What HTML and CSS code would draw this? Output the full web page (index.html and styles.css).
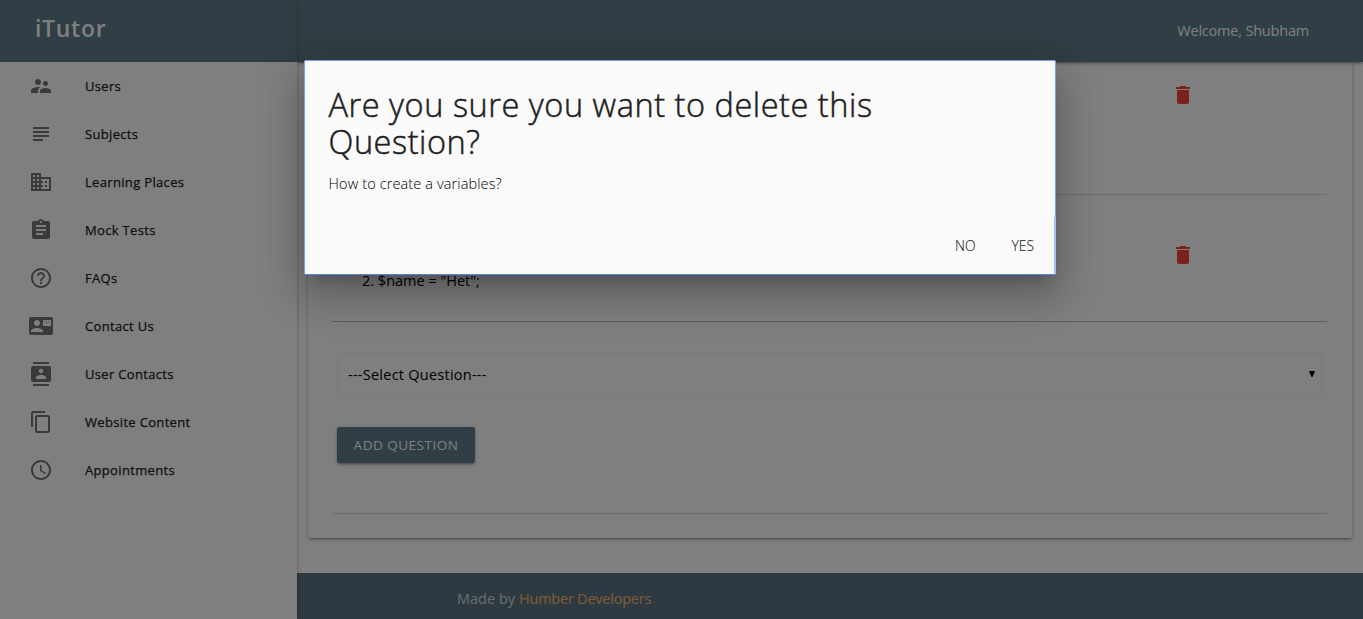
FILE: index.html
```
<!DOCTYPE html>
<html lang="en">
<head>
<meta charset="utf-8">
<title>iTutor</title>
<link rel="stylesheet" href="styles.css">
</head>
<body>
<div class="app">
  <aside class="sidenav">
    <div class="brand"><span class="brand-name">iTutor</span></div>
    <nav class="menu">
      <a class="item"><svg class="icon" viewBox="0 0 24 24"><path d="M16.500 12c1.380 0 2.490-1.120 2.490-2.500S17.880 7 16.500 7C15.120 7 14 8.120 14 9.500s1.120 2.500 2.500 2.500zM9 11c1.660 0 2.990-1.340 2.990-3S10.660 5 9 5C7.340 5 6 6.340 6 8s1.340 3 3 3zm7.500 3c-1.830 0-5.500.92-5.500 2.750V19h11v-2.250c0-1.830-3.670-2.750-5.500-2.750zM9 13c-2.330 0-7 1.170-7 3.500V19h7v-2.250c0-.85.33-2.340 2.370-3.470C10.500 13.100 9.660 13 9 13z"/></svg><span class="label">Users</span></a>
      <a class="item"><svg class="icon" viewBox="0 0 24 24"><path d="M14 17H4v2h10v-2zm6-8H4v2h16V9zM4 15h16v-2H4v2zM4 5v2h16V5H4z"/></svg><span class="label">Subjects</span></a>
      <a class="item"><svg class="icon" viewBox="0 0 24 24"><path d="M12 7V3H2v18h20V7H12zM6 19H4v-2h2v2zm0-4H4v-2h2v2zm0-4H4V9h2v2zm0-4H4V5h2v2zm4 12H8v-2h2v2zm0-4H8v-2h2v2zm0-4H8V9h2v2zm0-4H8V5h2v2zm10 12h-8v-2h2v-2h-2v-2h2v-2h-2V9h8v10zm-2-8h-2v2h2v-2zm0 4h-2v2h2v-2z"/></svg><span class="label">Learning Places</span></a>
      <a class="item"><svg class="icon" viewBox="0 0 24 24"><path d="M19 3h-4.180C14.400 1.840 13.300 1 12 1c-1.300 0-2.400.84-2.820 2H5c-1.100 0-2 .9-2 2v14c0 1.100.9 2 2 2h14c1.100 0 2-.9 2-2V5c0-1.100-.9-2-2-2zm-7 0c.55 0 1 .45 1 1s-.45 1-1 1-1-.45-1-1 .45-1 1-1zm2 14H7v-2h7v2zm3-4H7v-2h10v2zm0-4H7V7h10v2z"/></svg><span class="label">Mock Tests</span></a>
      <a class="item"><svg class="icon" viewBox="0 0 24 24"><path d="M11 18h2v-2h-2v2zm1-16C6.480 2 2 6.480 2 12s4.480 10 10 10 10-4.480 10-10S17.520 2 12 2zm0 18c-4.410 0-8-3.590-8-8s3.590-8 8-8 8 3.590 8 8-3.590 8-8 8zm0-14c-2.210 0-4 1.790-4 4h2c0-1.100.9-2 2-2s2 .9 2 2c0 2-3 1.750-3 5h2c0-2.250 3-2.500 3-5 0-2.210-1.790-4-4-4z"/></svg><span class="label">FAQs</span></a>
      <a class="item"><svg class="icon" viewBox="0 0 24 24"><path d="M22 3H2C.9 3 0 3.900 0 5v14c0 1.100.9 2 2 2h20c1.100 0 1.990-.9 1.990-2L24 5c0-1.100-.9-2-2-2zM8 6c1.660 0 3 1.340 3 3s-1.340 3-3 3-3-1.340-3-3 1.340-3 3-3zm6 12H2v-1c0-2 4-3.100 6-3.100s6 1.100 6 3.100v1zm8-6h-8V6h8v6z"/><path d="M21 7.500V7l-3 2-3-2v.5l3 2 3-2z"/></svg><span class="label">Contact Us</span></a>
      <a class="item"><svg class="icon" viewBox="0 0 24 24"><path d="M20 0H4v2h16V0zM4 24h16v-2H4v2zM20 4H4c-1.100 0-2 .9-2 2v12c0 1.100.9 2 2 2h16c1.100 0 2-.9 2-2V6c0-1.100-.9-2-2-2zm-8 2.750c1.240 0 2.250 1.010 2.250 2.250s-1.010 2.250-2.250 2.250S9.750 10.240 9.750 9 10.760 6.750 12 6.750zM17 17H7v-1.500c0-1.670 3.330-2.500 5-2.500s5 .83 5 2.500V17z"/></svg><span class="label">User Contacts</span></a>
      <a class="item"><svg class="icon" viewBox="0 0 24 24"><path d="M16 1H4c-1.100 0-2 .9-2 2v14h2V3h12V1zm3 4H8c-1.100 0-2 .9-2 2v14c0 1.100.9 2 2 2h11c1.100 0 2-.9 2-2V7c0-1.100-.9-2-2-2zm0 16H8V7h11v14z"/></svg><span class="label">Website Content</span></a>
      <a class="item"><svg class="icon" viewBox="0 0 24 24"><path d="M11.990 2C6.470 2 2 6.480 2 12s4.470 10 9.990 10C17.520 22 22 17.520 22 12S17.520 2 11.990 2zM12 20c-4.420 0-8-3.580-8-8s3.580-8 8-8 8 3.580 8 8-3.580 8-8 8zm.5-13H11v6l5.250 3.150.75-1.230-4.500-2.670z"/></svg><span class="label">Appointments</span></a>
    </nav>
  </aside>
  <div class="page">
    <header class="topbar"><span class="welcome">Welcome, Shubham</span></header>
    <main class="content">
      <section class="card">
        <div class="question first">
          <svg class="trash" viewBox="0 0 24 24"><path d="M6 19c0 1.100.9 2 2 2h8c1.100 0 2-.9 2-2V7H6v12zM19 4h-3.500l-1-1h-5l-1 1H5v2h14V4z"/></svg>
        </div>
        <div class="question second">
          <span class="answer">2. $name = "Het";</span>
          <svg class="trash" viewBox="0 0 24 24"><path d="M6 19c0 1.100.9 2 2 2h8c1.100 0 2-.9 2-2V7H6v12zM19 4h-3.500l-1-1h-5l-1 1H5v2h14V4z"/></svg>
        </div>
        <form class="add-form">
          <div class="select"><span class="select-text">---Select Question---</span><svg class="caret" viewBox="0 0 6 6"><path d="M0 0h6L3.500 6h-1z"/></svg></div>
          <button class="add" type="button"><span class="add-text">ADD QUESTION</span></button>
        </form>
      </section>
    </main>
    <footer class="footer"><span class="made">Made by</span><a class="team">Humber Developers</a></footer>
  </div>
</div>
<div class="overlay"></div>
<div class="modal" role="dialog">
  <h4 class="title">Are you sure you want to delete this Question?</h4>
  <p class="subject">How to create a variables?</p>
  <div class="actions"><a class="no">NO</a><a class="yes">YES</a></div>
</div>
</body>
</html>
```
FILE: styles.css
```
* { box-sizing: border-box; }

body {
  margin: 0;
  font-family: "Open Sans", "Noto Sans", sans-serif;
  font-size: 14.5px;
  color: rgba(0, 0, 0, .87);
  overflow: hidden;
}

.app { display: flex; height: 619px; background: #fff; }

.sidenav {
  position: relative;
  z-index: 2;
  flex: none;
  width: 297px;
  background: #fff;
  box-shadow: 0 2px 2px 0 rgba(0, 0, 0, .14), 0 3px 1px -2px rgba(0, 0, 0, .12), 0 1px 5px 0 rgba(0, 0, 0, .2);
}

.brand { height: 62px; padding: 9px 0 0 35px; background: #607d8b; color: #fff; }
.brand-name { font: 600 23px/38px "Open Sans", sans-serif; letter-spacing: .7px; }

.item { display: flex; align-items: center; height: 48px; padding-left: 29px; }
.icon { width: 24px; height: 24px; margin-right: 32px; fill: rgba(0, 0, 0, .54); }
.label { font-size: 13px; font-weight: 500; letter-spacing: .33px; color: #212121; -webkit-text-stroke: .25px #212121; }

.page { flex: 1; display: flex; flex-direction: column; }

.topbar {
  position: relative;
  z-index: 1;
  display: flex;
  align-items: center;
  justify-content: flex-end;
  height: 62px;
  padding: 0 54px 2px 0;
  background: #607d8b;
  color: #fff;
  letter-spacing: -.2px;
  box-shadow: 0 2px 2px 0 rgba(0, 0, 0, .14), 0 3px 1px -2px rgba(0, 0, 0, .12), 0 1px 5px 0 rgba(0, 0, 0, .2);
}

.content { height: 511px; padding: 0 11px 35px; }

.card {
  height: 476px;
  padding: 0 25px 24px 24px;
  border-radius: 0 0 2px 2px;
  background: #fff;
  box-shadow: 0 2px 2px 0 rgba(0, 0, 0, .14), 0 3px 1px -2px rgba(0, 0, 0, .12), 0 1px 5px 0 rgba(0, 0, 0, .2);
}

.question { display: flex; justify-content: space-between; padding-right: 132.500px; border-bottom: 1px solid #d8d8d8; }
.first { height: 133px; padding-top: 21px; justify-content: flex-end; }
.second { height: 127px; padding-top: 48px; border-color: #bdbdbd; }
.trash { width: 24px; height: 24px; fill: #f44336; }
.answer { padding: 26px 0 0 30px; line-height: 24px; color: #000; }

.add-form { height: 192px; padding: 30px 5px 0; border-bottom: 1px solid #d8d8d8; }

.select {
  display: flex;
  align-items: center;
  justify-content: space-between;
  height: 45px;
  padding: 0 6px 0 10px;
  border: 1px solid #f2f2f2;
  border-radius: 2px;
  color: #000;
  letter-spacing: .25px;
}
.caret { width: 6px; height: 6px; margin-top: -2px; }

.add {
  width: 138px;
  height: 36px;
  margin-top: 30px;
  padding: 0;
  border: 0;
  border-radius: 2px;
  background: #607d8b;
  color: #fff;
  font: 400 13.5px/36px "Open Sans", sans-serif;
  letter-spacing: .5px;
  box-shadow: 0 2px 2px 0 rgba(0, 0, 0, .14), 0 3px 1px -2px rgba(0, 0, 0, .12), 0 1px 5px 0 rgba(0, 0, 0, .2);
}

.footer {
  display: flex;
  gap: 4px;
  height: 46px;
  padding: 14px 0 0 160px;
  line-height: 24px;
  background: #5c7584;
  color: #d5dce0;
}
.team { color: #ffb870; letter-spacing: -.23px; }

.overlay { position: absolute; z-index: 5; inset: 0; background: rgba(0, 0, 0, .5); }

.modal {
  position: absolute;
  z-index: 6;
  left: 304px;
  top: 60px;
  width: 752px;
  height: 215px;
  padding: 25px 12px 0 23.500px;
  border: 1px solid #76a2f2;
  border-bottom-color: #5583d6;
  border-radius: 2px;
  background: #fafafa;
  box-shadow: 0 24px 38px 3px rgba(0, 0, 0, .14), 0 9px 46px 8px rgba(0, 0, 0, .12), 0 11px 15px -7px rgba(0, 0, 0, .2);
}

/* the lower part of the focus ring is brighter and a pixel thicker */
.modal::after {
  content: "";
  position: absolute;
  right: -1px;
  bottom: 0;
  width: 2px;
  height: 57px;
  background: #9dc0fb;
}

.title { width: 600px; margin: 0; color: #212121; font-size: 32.500px; font-weight: 300; letter-spacing: .54px; line-height: 37px; -webkit-text-stroke: .5px #212121; }
.subject { margin: 12px 0 0; font-weight: 300; letter-spacing: .12px; line-height: 24px; color: #000; }

.actions { display: flex; justify-content: flex-end; gap: 36px; margin-top: 38px; padding-right: 9px; font-size: 13.800px; font-weight: 300; line-height: 24px; -webkit-text-stroke: .15px #212121; }
```
